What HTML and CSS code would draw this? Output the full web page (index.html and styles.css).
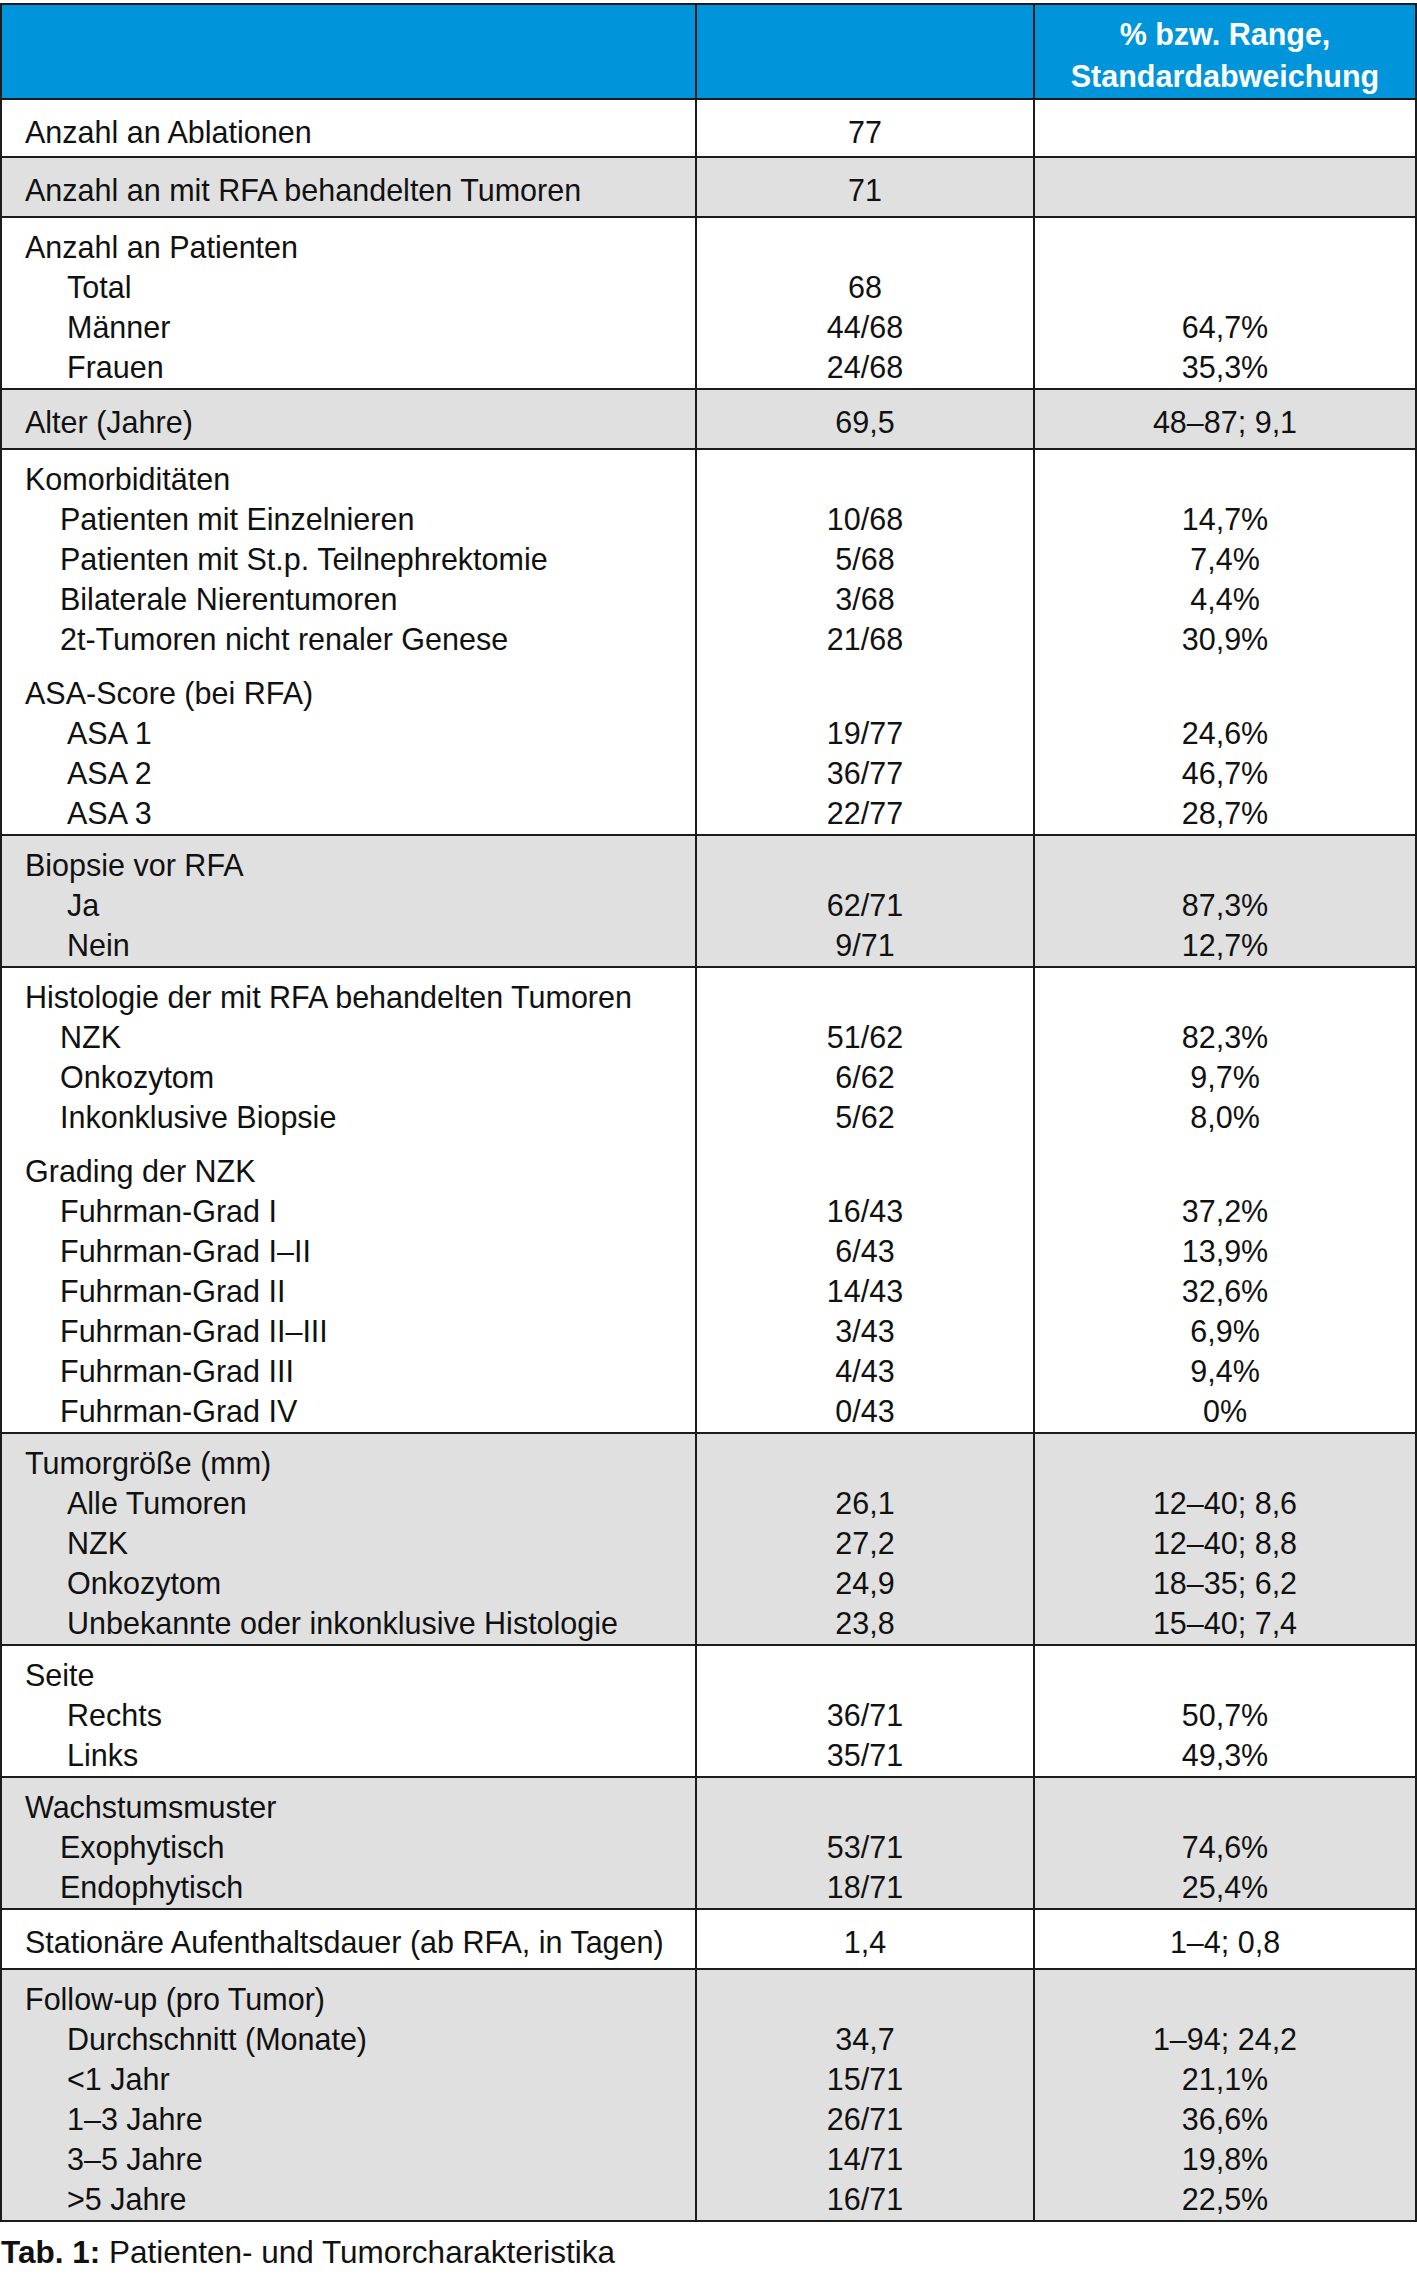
FILE: index.html
```html
<!DOCTYPE html>
<html lang="de">
<head>
<meta charset="utf-8">
<title>Tab. 1: Patienten- und Tumorcharakteristika</title>
<link rel="stylesheet" href="styles.css">
</head>
<body>
<table class="tbl">
  <colgroup><col class="c1"><col class="c2"><col class="c3"></colgroup>
  <thead>
    <tr class="head">
      <th></th>
      <th></th>
      <th><div class="h">% bzw. Range,</div><div class="h">Standardabweichung</div></th>
    </tr>
  </thead>
  <tbody>
    <tr class="single first white">
      <td class="lab"><div class="l">Anzahl an Ablationen</div></td>
      <td class="val"><div class="l">77</div></td>
      <td class="val"><div class="l"></div></td>
    </tr>
    <tr class="single gray">
      <td class="lab"><div class="l">Anzahl an mit RFA behandelten Tumoren</div></td>
      <td class="val"><div class="l">71</div></td>
      <td class="val"><div class="l"></div></td>
    </tr>
    <tr class="multi white">
      <td class="lab">
        <div class="l">Anzahl an Patienten</div>
        <div class="l i2">Total</div>
        <div class="l i2">Männer</div>
        <div class="l i2">Frauen</div>
      </td>
      <td class="val">
        <div class="l"></div><div class="l">68</div><div class="l">44/68</div><div class="l">24/68</div>
      </td>
      <td class="val">
        <div class="l"></div><div class="l"></div><div class="l">64,7%</div><div class="l">35,3%</div>
      </td>
    </tr>
    <tr class="single gray">
      <td class="lab"><div class="l">Alter (Jahre)</div></td>
      <td class="val"><div class="l">69,5</div></td>
      <td class="val"><div class="l">48–87; 9,1</div></td>
    </tr>
    <tr class="multi white">
      <td class="lab">
        <div class="l">Komorbiditäten</div>
        <div class="l i1">Patienten mit Einzelnieren</div>
        <div class="l i1">Patienten mit St.p. Teilnephrektomie</div>
        <div class="l i1">Bilaterale Nierentumoren</div>
        <div class="l i1">2t-Tumoren nicht renaler Genese</div>
        <div class="gap"></div>
        <div class="l">ASA-Score (bei RFA)</div>
        <div class="l i2">ASA 1</div>
        <div class="l i2">ASA 2</div>
        <div class="l i2">ASA 3</div>
      </td>
      <td class="val">
        <div class="l"></div><div class="l">10/68</div><div class="l">5/68</div><div class="l">3/68</div><div class="l">21/68</div>
        <div class="gap"></div>
        <div class="l"></div><div class="l">19/77</div><div class="l">36/77</div><div class="l">22/77</div>
      </td>
      <td class="val">
        <div class="l"></div><div class="l">14,7%</div><div class="l">7,4%</div><div class="l">4,4%</div><div class="l">30,9%</div>
        <div class="gap"></div>
        <div class="l"></div><div class="l">24,6%</div><div class="l">46,7%</div><div class="l">28,7%</div>
      </td>
    </tr>
    <tr class="multi gray">
      <td class="lab">
        <div class="l">Biopsie vor RFA</div>
        <div class="l i2">Ja</div>
        <div class="l i2">Nein</div>
      </td>
      <td class="val"><div class="l"></div><div class="l">62/71</div><div class="l">9/71</div></td>
      <td class="val"><div class="l"></div><div class="l">87,3%</div><div class="l">12,7%</div></td>
    </tr>
    <tr class="multi white">
      <td class="lab">
        <div class="l">Histologie der mit RFA behandelten Tumoren</div>
        <div class="l i1">NZK</div>
        <div class="l i1">Onkozytom</div>
        <div class="l i1">Inkonklusive Biopsie</div>
        <div class="gap"></div>
        <div class="l">Grading der NZK</div>
        <div class="l i1">Fuhrman-Grad I</div>
        <div class="l i1">Fuhrman-Grad I–II</div>
        <div class="l i1">Fuhrman-Grad II</div>
        <div class="l i1">Fuhrman-Grad II–III</div>
        <div class="l i1">Fuhrman-Grad III</div>
        <div class="l i1">Fuhrman-Grad IV</div>
      </td>
      <td class="val">
        <div class="l"></div><div class="l">51/62</div><div class="l">6/62</div><div class="l">5/62</div>
        <div class="gap"></div>
        <div class="l"></div><div class="l">16/43</div><div class="l">6/43</div><div class="l">14/43</div><div class="l">3/43</div><div class="l">4/43</div><div class="l">0/43</div>
      </td>
      <td class="val">
        <div class="l"></div><div class="l">82,3%</div><div class="l">9,7%</div><div class="l">8,0%</div>
        <div class="gap"></div>
        <div class="l"></div><div class="l">37,2%</div><div class="l">13,9%</div><div class="l">32,6%</div><div class="l">6,9%</div><div class="l">9,4%</div><div class="l">0%</div>
      </td>
    </tr>
    <tr class="multi gray">
      <td class="lab">
        <div class="l">Tumorgröße (mm)</div>
        <div class="l i2">Alle Tumoren</div>
        <div class="l i2">NZK</div>
        <div class="l i2">Onkozytom</div>
        <div class="l i2">Unbekannte oder inkonklusive Histologie</div>
      </td>
      <td class="val">
        <div class="l"></div><div class="l">26,1</div><div class="l">27,2</div><div class="l">24,9</div><div class="l">23,8</div>
      </td>
      <td class="val">
        <div class="l"></div><div class="l">12–40; 8,6</div><div class="l">12–40; 8,8</div><div class="l">18–35; 6,2</div><div class="l">15–40; 7,4</div>
      </td>
    </tr>
    <tr class="multi white">
      <td class="lab">
        <div class="l">Seite</div>
        <div class="l i2">Rechts</div>
        <div class="l i2">Links</div>
      </td>
      <td class="val"><div class="l"></div><div class="l">36/71</div><div class="l">35/71</div></td>
      <td class="val"><div class="l"></div><div class="l">50,7%</div><div class="l">49,3%</div></td>
    </tr>
    <tr class="multi gray">
      <td class="lab">
        <div class="l">Wachstumsmuster</div>
        <div class="l i1">Exophytisch</div>
        <div class="l i1">Endophytisch</div>
      </td>
      <td class="val"><div class="l"></div><div class="l">53/71</div><div class="l">18/71</div></td>
      <td class="val"><div class="l"></div><div class="l">74,6%</div><div class="l">25,4%</div></td>
    </tr>
    <tr class="single white">
      <td class="lab"><div class="l">Stationäre Aufenthaltsdauer (ab RFA, in Tagen)</div></td>
      <td class="val"><div class="l">1,4</div></td>
      <td class="val"><div class="l">1–4; 0,8</div></td>
    </tr>
    <tr class="multi gray">
      <td class="lab">
        <div class="l">Follow-up (pro Tumor)</div>
        <div class="l i2">Durchschnitt (Monate)</div>
        <div class="l i2">&lt;1 Jahr</div>
        <div class="l i2">1–3 Jahre</div>
        <div class="l i2">3–5 Jahre</div>
        <div class="l i2">&gt;5 Jahre</div>
      </td>
      <td class="val">
        <div class="l"></div><div class="l">34,7</div><div class="l">15/71</div><div class="l">26/71</div><div class="l">14/71</div><div class="l">16/71</div>
      </td>
      <td class="val">
        <div class="l"></div><div class="l">1–94; 24,2</div><div class="l">21,1%</div><div class="l">36,6%</div><div class="l">19,8%</div><div class="l">22,5%</div>
      </td>
    </tr>
  </tbody>
</table>
<p class="caption"><span class="cap-b">Tab. 1:</span> Patienten- und Tumorcharakteristika</p>
</body>
</html>
```
FILE: styles.css
```css
html, body {
  margin: 0;
  padding: 0;
  background: #ffffff;
}

body {
  padding-top: 3px;
  font-family: "Liberation Sans", Arial, "DejaVu Sans", sans-serif;
  color: #111111;
}

.tbl {
  width: 1417px;
  box-sizing: border-box;
  table-layout: fixed;
  border-collapse: separate;
  border-spacing: 0;
  border-top: 2px solid #1c1c1c;
  border-left: 2px solid #1c1c1c;
  font-size: 30.5px;
}

.c1 { width: 695px; }
.c2 { width: 338px; }
.c3 { width: auto; }

.tbl th,
.tbl td {
  border-right: 2px solid #1c1c1c;
  border-bottom: 2px solid #1c1c1c;
  vertical-align: top;
  padding: 0;
}

.head th {
  background: #0095db;
  color: #ffffff;
  font-weight: bold;
  text-align: center;
  padding: 8px 0 1px;
}

.h {
  height: 42px;
  line-height: 42px;
  white-space: nowrap;
}

.white td { background: #ffffff; }
.gray td { background: #e0e0e0; }

.single td { padding-top: 12px; padding-bottom: 6px; }
.single.first td { padding-bottom: 4px; }
.multi td { padding-top: 9px; padding-bottom: 1px; }

.lab { padding-left: 23px !important; text-align: left; }
.val { text-align: center; }

.l {
  height: 40px;
  line-height: 40px;
  white-space: nowrap;
}

.i1 { margin-left: 35px; }
.i2 { margin-left: 42px; }

.gap { height: 14px; }

.caption {
  margin: 10px 0 0;
  padding-left: 1px;
  font-size: 31.5px;
  line-height: 40px;
  color: #111111;
}

.cap-b { font-weight: bold; }
```
